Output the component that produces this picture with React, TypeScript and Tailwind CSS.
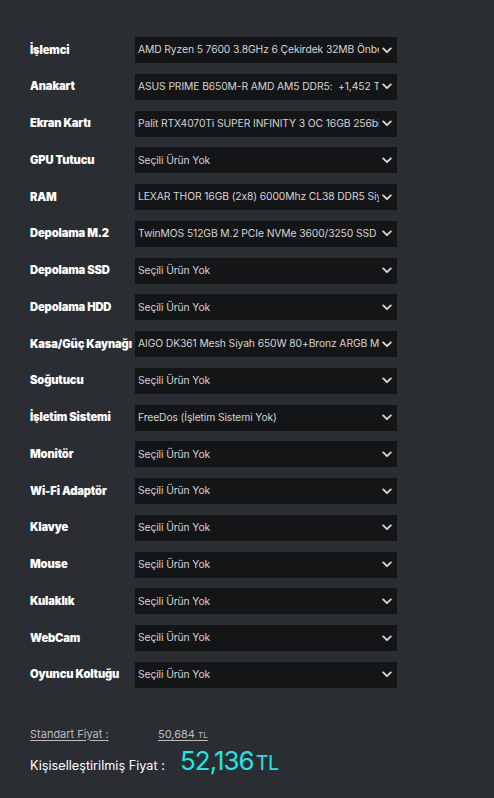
import React from 'react'

// Parça listesi
const parts: { label: string; value: string }[] = [
  { label: 'İşlemci', value: 'AMD Ryzen 5 7600 3.8GHz 6 Çekirdek 32MB Önbellek AM5 İşlemci' },
  { label: 'Anakart', value: 'ASUS PRIME B650M-R AMD AM5 DDR5:  +1,452 TL' },
  { label: 'Ekran Kartı', value: 'Palit RTX4070Ti SUPER INFINITY 3 OC 16GB 256bit GDDR6X' },
  { label: 'GPU Tutucu', value: 'Seçili Ürün Yok' },
  { label: 'RAM', value: 'LEXAR THOR 16GB (2x8) 6000Mhz CL38 DDR5 Siyah' },
  { label: 'Depolama M.2', value: 'TwinMOS 512GB M.2 PCIe NVMe 3600/3250 SSD M.2' },
  { label: 'Depolama SSD', value: 'Seçili Ürün Yok' },
  { label: 'Depolama HDD', value: 'Seçili Ürün Yok' },
  { label: 'Kasa/Güç Kaynağı', value: 'AIGO DK361 Mesh Siyah 650W 80+Bronz ARGB Mid Tower' },
  { label: 'Soğutucu', value: 'Seçili Ürün Yok' },
  { label: 'İşletim Sistemi', value: 'FreeDos (İşletim Sistemi Yok)' },
  { label: 'Monitör', value: 'Seçili Ürün Yok' },
  { label: 'Wi-Fi Adaptör', value: 'Seçili Ürün Yok' },
  { label: 'Klavye', value: 'Seçili Ürün Yok' },
  { label: 'Mouse', value: 'Seçili Ürün Yok' },
  { label: 'Kulaklık', value: 'Seçili Ürün Yok' },
  { label: 'WebCam', value: 'Seçili Ürün Yok' },
  { label: 'Oyuncu Koltuğu', value: 'Seçili Ürün Yok' },
]

const Chevron = () => (
  <svg width="10" height="7" viewBox="0 0 10 7" className="shrink-0">
    <path d="M1.2 1.4 L5 5.2 L8.8 1.4" fill="none" stroke="#d6d6d6" strokeWidth="1.9" strokeLinecap="round" strokeLinejoin="round" />
  </svg>
)

const PartRow = ({ label, value }: { label: string; value: string }) => (
  <div className="flex items-center h-[26px]">
    <div className="w-[105px] text-[11.2px] font-black text-white whitespace-nowrap tracking-[-0.15px]">
      {label}
    </div>
    <div className="w-[262px] h-full bg-[#141517] flex items-center pl-[3px] pr-[5px] gap-[3px]">
      <span className="flex-1 overflow-hidden whitespace-pre text-[10.3px] tracking-[-0.1px] text-[#d4d4d4]">{value}</span>
      <Chevron />
    </div>
  </div>
)

export default function App() {
  return (
    <div
      className="w-[494px] h-[798px] bg-[#2a2d32] overflow-hidden"
      style={{ fontFamily: 'Inter, "Noto Sans", sans-serif' }}
    >
      <div className="pt-[37px] pl-[30px] flex flex-col gap-[10.76px]">
        {parts.map((p) => (
          <PartRow key={p.label} label={p.label} value={p.value} />
        ))}
      </div>

      <div className="pl-[30px] mt-[38px]">
        <div className="flex items-baseline text-[11px] text-[#bdbdbd] underline underline-offset-2">
          <span className="w-[128px]">Standart Fiyat :</span>
          <span>
            50,684 <span className="text-[8px]">TL</span>
          </span>
        </div>
        <div className="flex items-baseline mt-[6px]">
          <span className="w-[150px] text-[12.7px] text-white">Kişiselleştirilmiş Fiyat :</span>
          <span className="text-[26px] text-[#1de5e8] leading-none tracking-[-1px]">52,136</span>
          <span className="text-[20px] text-[#1de5e8] leading-none ml-[2px] tracking-[-0.5px]">TL</span>
        </div>
      </div>
    </div>
  )
}
